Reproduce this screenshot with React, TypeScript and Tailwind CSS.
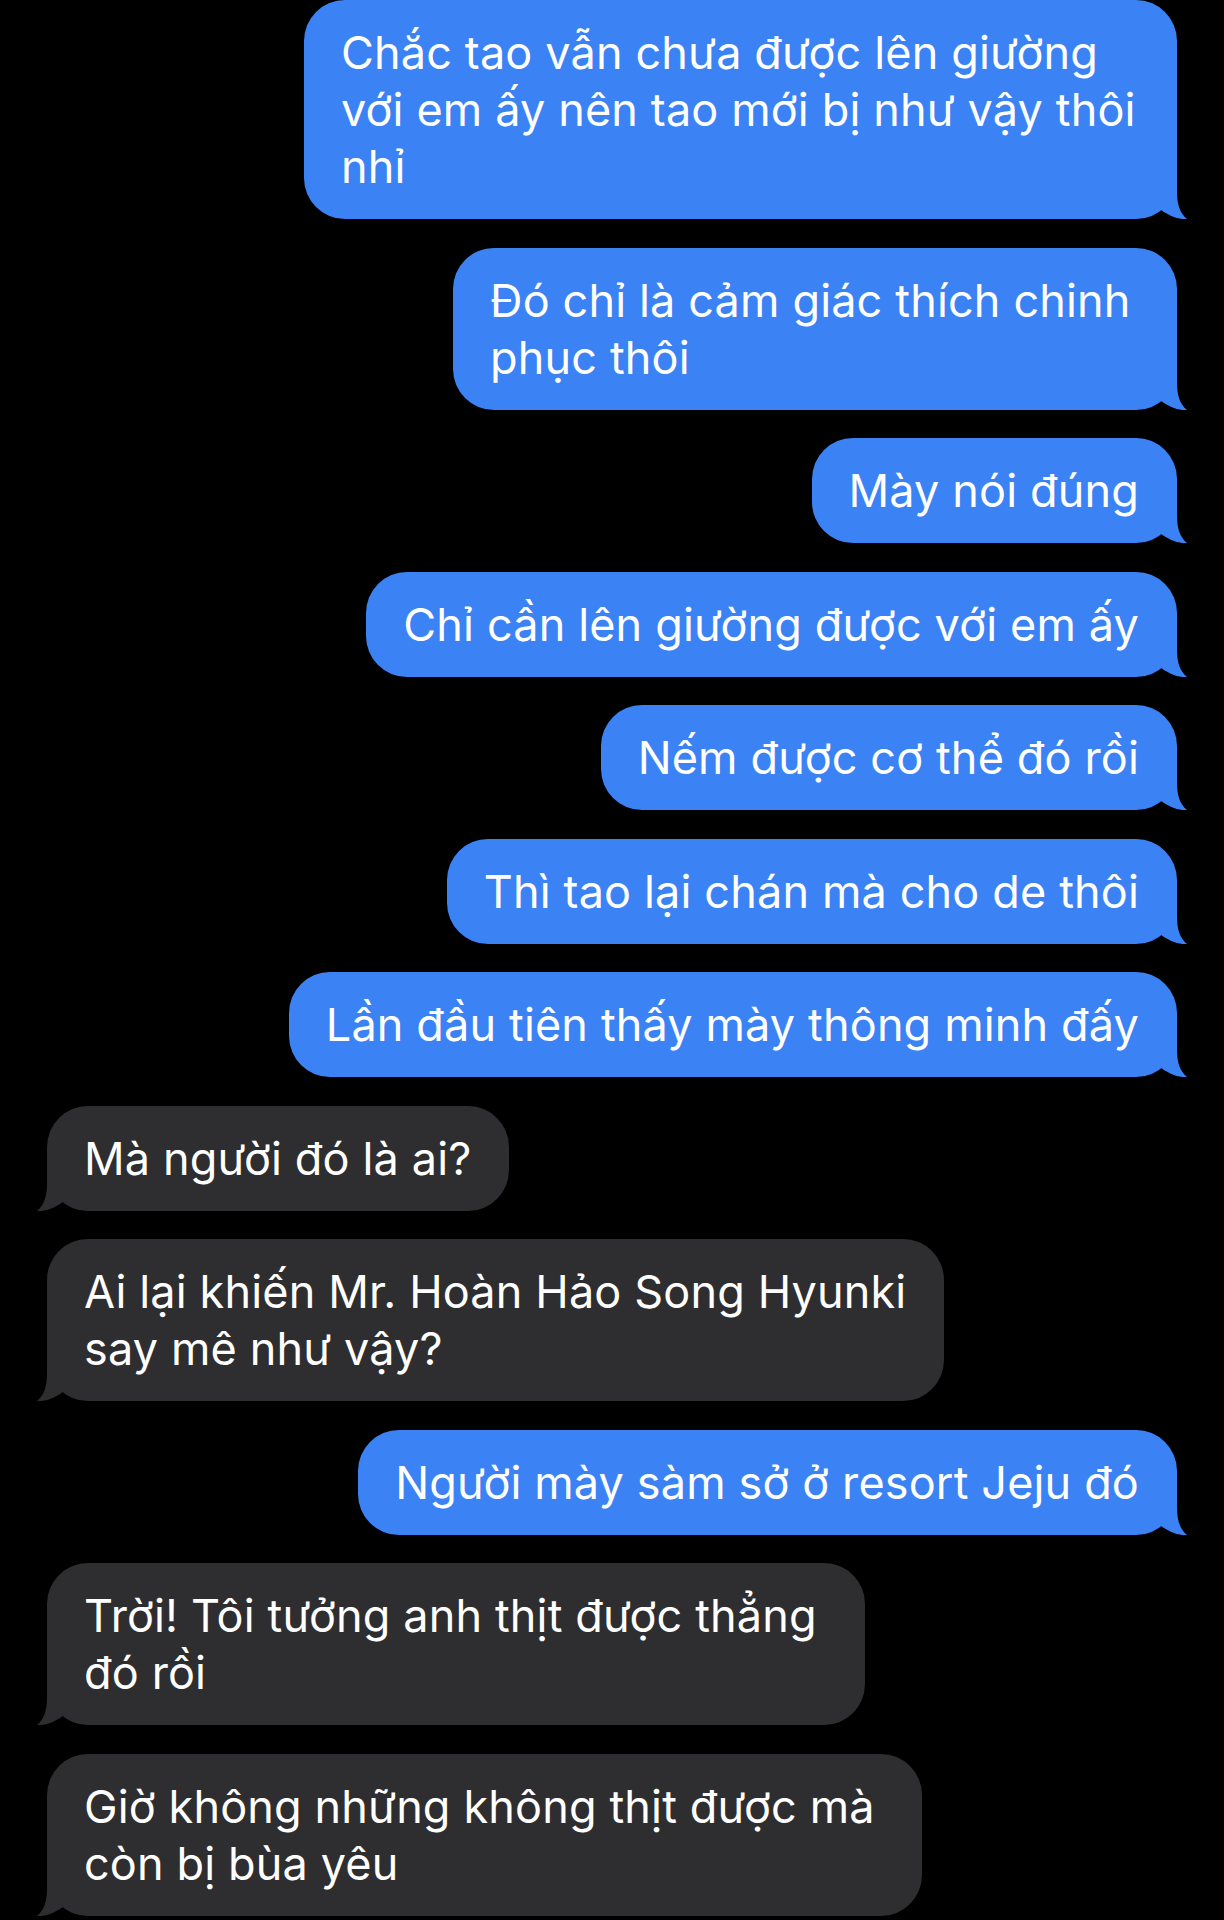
import React from "react";

interface Message {
  id: number;
  lines: string[];
  mine: boolean;
  width?: string;
}

const messages: Message[] = [
  {
    id: 1,
    lines: ["Chắc tao vẫn chưa được lên giường", "với em ấy nên tao mới bị như vậy thôi", "nhỉ"],
    mine: true,
    width: "w-[873px]",
  },
  { id: 2, lines: ["Đó chỉ là cảm giác thích chinh", "phục thôi"], mine: true, width: "w-[724px]" },
  { id: 3, lines: ["Mày nói đúng"], mine: true },
  { id: 4, lines: ["Chỉ cần lên giường được với em ấy"], mine: true },
  { id: 5, lines: ["Nếm được cơ thể đó rồi"], mine: true },
  { id: 6, lines: ["Thì tao lại chán mà cho de thôi"], mine: true },
  { id: 7, lines: ["Lần đầu tiên thấy mày thông minh đấy"], mine: true },
  { id: 8, lines: ["Mà người đó là ai?"], mine: false },
  { id: 9, lines: ["Ai lại khiến Mr. Hoàn Hảo Song Hyunki", "say mê như vậy?"], mine: false, width: "w-[897px]" },
  { id: 10, lines: ["Người mày sàm sở ở resort Jeju đó"], mine: true },
  { id: 11, lines: ["Trời! Tôi tưởng anh thịt được thẳng", "đó rồi"], mine: false, width: "w-[818px]" },
  { id: 12, lines: ["Giờ không những không thịt được mà", "còn bị bùa yêu"], mine: false, width: "w-[875px]" },
];

// little curled tail under the bubble corner
function Tail({ mine }: { mine: boolean }) {
  return (
    <svg
      viewBox="0 0 40 50"
      className={`absolute bottom-[-2px] h-[50px] w-[40px] ${
        mine ? "right-[-10px] fill-[#3b82f5]" : "left-[-10px] -scale-x-100 fill-[#2e2e30]"
      }`}
    >
      <path d="M30 0 L30 20 C30 34 33 42 40 48 C33 48.6 24 46 14 39 L10 30 L20 0 Z" />
    </svg>
  );
}

function Bubble({ message }: { message: Message }) {
  const { lines, mine, width } = message;
  return (
    <div className={`flex ${mine ? "justify-end" : "justify-start"}`}>
      <div
        className={`relative rounded-[41px] py-[24px] pl-[37px] ${width ?? "w-fit pr-[38px]"} ${
          mine ? "bg-[#3b82f5]" : "bg-[#2e2e30]"
        }`}
      >
        <p className="relative z-10 text-[45px] leading-[57px] tracking-[0.15px] text-white whitespace-nowrap">
          {lines.map((line, i) => (
            <span key={i} className="block">
              {line}
            </span>
          ))}
        </p>
        <Tail mine={mine} />
      </div>
    </div>
  );
}

export default function App() {
  return (
    <div
      className="w-[1224px] h-[1920px] overflow-hidden bg-black px-[47px] flex flex-col gap-[28.5px]"
      style={{ fontFamily: "Inter, 'Noto Sans', sans-serif" }}
    >
      {messages.map((m) => (
        <Bubble key={m.id} message={m} />
      ))}
    </div>
  );
}
